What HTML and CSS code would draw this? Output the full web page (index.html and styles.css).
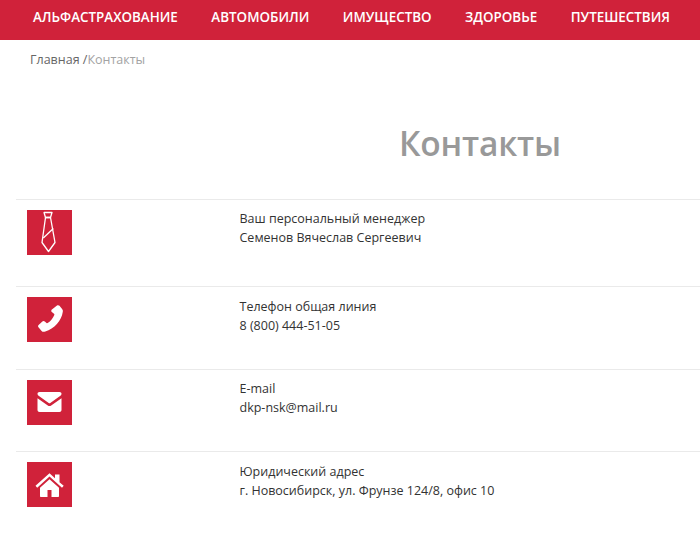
FILE: index.html
```html
<!DOCTYPE html>
<html lang="ru">
<head>
<meta charset="utf-8">
<title>Контакты</title>
<link rel="stylesheet" href="styles.css">
</head>
<body>
<nav class="topnav">
  <a href="#">АЛЬФАСТРАХОВАНИЕ</a>
  <a href="#">АВТОМОБИЛИ</a>
  <a href="#">ИМУЩЕСТВО</a>
  <a href="#">ЗДОРОВЬЕ</a>
  <a href="#">ПУТЕШЕСТВИЯ</a>
</nav>
<div class="crumbs"><a href="#">Главная /</a><span>Контакты</span></div>
<h1 class="title">Контакты</h1>
<section class="contacts">
  <div class="row row-first">
    <div class="icon">
      <svg width="45" height="45" viewBox="0 0 45 45" fill="none" stroke="#fff" stroke-width="1.300" stroke-linejoin="round">
        <path d="M17 2.500h8l-1.500 5h-5z"/>
        <path d="M18.500 7.500h5l4.500 25-6.500 9-6.500-9z"/>
        <path d="M16.300 28 26.300 18.500"/>
      </svg>
    </div>
    <div class="text text-up">Ваш персональный менеджер<br>Семенов Вячеслав Сергеевич</div>
  </div>
  <div class="row row-second">
    <div class="icon">
      <svg width="45" height="45" viewBox="0 0 45 45" fill="#fff">
        <path d="M30 8.500c1-.6 1.800-.3 2.500.3l2.600 3.200c.7.900.9 1.600.7 2.700-1.300 9.300-8.500 17-17.500 19.700-1.500.5-2.800.5-3.700-.5l-2.900-3.300c-.8-.9-.8-1.800-.1-2.600l3.500-3.300c.9-.8 1.800-.8 2.700-.1l1.700 1.300c.4.300.8.300 1.200.1 3-1.900 5.300-4.700 6.600-8 .2-.5.100-.9-.3-1.200l-1.900-1.500c-.9-.7-1.100-1.600-.5-2.600z"/>
      </svg>
    </div>
    <div class="text">Телефон общая линия<br>8 (800) 444-51-05</div>
  </div>
  <div class="row">
    <div class="icon">
      <svg width="45" height="45" viewBox="0 0 45 45" fill="#fff">
        <path d="M12.500 12h20c1.200 0 2 .8 2 1.800 0 .9-.4 1.500-1.100 2L23.300 23c-.5.400-1.100.400-1.600 0L11.600 15.800c-.7-.5-1.100-1.100-1.100-2 0-1 .8-1.800 2-1.800z"/>
        <path d="M10.500 18.300 20.800 25.500c1 .7 2.400.7 3.400 0l10.300-7.200V30c0 1.200-.9 2-2 2h-20c-1.100 0-2-.8-2-2z"/>
      </svg>
    </div>
    <div class="text text-up">E-mail<br>dkp-nsk@mail.ru</div>
  </div>
  <div class="row">
    <div class="icon">
      <svg width="45" height="45" viewBox="0 0 45 45" fill="#fff">
        <path d="M8.500 23.800 22.500 11.300l5.500 5V12.500h4.500v7.800l4.200 3.500-1.700 1.900L22.500 14.500 10.200 25.700z"/>
        <path d="M13 25.800 22.500 17.300 32 25.800V34c0 .6-.4 1-1 1h-6.500v-7h-4v7H14c-.6 0-1-.4-1-1z"/>
      </svg>
    </div>
    <div class="text">Юридический адрес<br>г. Новосибирск, ул. Фрунзе 124/8, офис 10</div>
  </div>
</section>
</body>
</html>
```
FILE: styles.css
```css
* { box-sizing: border-box; }
html, body { margin: 0; padding: 0; }
body {
  width: 700px;
  height: 545px;
  overflow: hidden;
  background: #fff;
  font-family: "Open Sans", sans-serif;
  color: #333;
}
.topnav {
  display: flex;
  height: 40px;
  align-items: center;
  gap: 33.500px;
  padding: 0 0 6px 33px;
  background: #d0223a;
  white-space: nowrap;
}
.topnav a {
  color: #fff;
  font-size: 13.400px;
  font-weight: 600;
  text-decoration: none;
}
.crumbs {
  padding: 10px 0 0 30px;
  font-size: 12.500px;
  line-height: 19px;
  color: #a3a3a3;
}
.crumbs a { color: #666; text-decoration: none; }
.title {
  margin: 52px 0 0;
  padding-left: 399px;
  font-size: 33.500px;
  font-weight: 600;
  line-height: 45px;
  color: #999;
  letter-spacing: -0.200px;
}
.contacts { margin: 33px 0 0 16px; }
.row {
  display: grid;
  grid-template-columns: 45px 1fr;
  column-gap: 167.500px;
  height: 82px;
  padding: 10px 0 0 11px;
  border-top: 1px solid #eaeaea;
}
.row-first { height: 87px; }
.row-second { height: 83px; }
.icon {
  width: 45px;
  height: 45px;
  background: #d0223a;
}
.icon svg { display: block; }
.text {
  font-size: 12.500px;
  line-height: 19px;
  color: #333;
}
.text-up { margin-top: -1px; }
```
